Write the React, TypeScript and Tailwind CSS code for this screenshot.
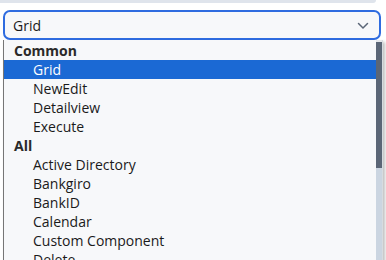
const common = ["Grid", "NewEdit", "Detailview", "Execute"];
const all = [
  "Active Directory",
  "Bankgiro",
  "BankID",
  "Calendar",
  "Custom Component",
  "Delete",
];

function Row({ label, active }: { label: string; active?: boolean }) {
  return (
    <div
      className={`h-[19px] flex items-center pl-[29px] text-[14px] leading-none ${
        active ? "bg-[#1b69d4] text-white" : "text-[#1a1a1a]"
      }`}
    >
      {label}
    </div>
  );
}

export default function App() {
  return (
    <div
      className="w-[386px] h-[260px] overflow-hidden bg-white relative"
      style={{ fontFamily: "'Open Sans', 'Noto Sans', sans-serif" }}
    >
      <div className="h-[3px] w-[376px] bg-[#dfe4ec] rounded-br-[3px]" />
      <div className="px-[3px] pt-[7px]">
        <div className="h-[30px] w-[378px] border-2 border-[#2f6ce0] rounded-[7px] bg-[#f7f8fa] flex items-center justify-between pl-[8px] pr-[10px]">
          <span className="text-[14px] text-[#1a1a1a]">Grid</span>
          <svg width="12" height="8" viewBox="0 0 12 8" className="mt-[1px]">
            <path
              d="M1.5 1.5 L6 6 L10.5 1.5"
              fill="none"
              stroke="#5b6677"
              strokeWidth="1.5"
              strokeLinecap="round"
            />
          </svg>
        </div>
        <div className="flex w-[380px] h-[230px] border-l border-[#767676] bg-[#f7f8fa] shadow-[2px_2px_3px_rgba(0,0,0,0.25)]">
          <div className="flex-1 pt-[1px]">
            <div className="h-[19px] flex items-center pl-[10px] text-[14px] font-bold text-[#2a2a2a]">
              Common
            </div>
            {common.map((c) => (
              <Row key={c} label={c} active={c === "Grid"} />
            ))}
            <div className="h-[19px] flex items-center pl-[10px] text-[14px] font-bold text-[#2a2a2a]">
              All
            </div>
            {all.map((c) => (
              <Row key={c} label={c} />
            ))}
          </div>
          <div className="w-[6px] flex flex-col bg-[#cbd5e1]">
            <div className="h-[2px] bg-[#e5e7eb]" />
            <div className="h-[126px] bg-[#5b6677]" />
          </div>
          <div className="w-[1px] bg-[#d7dbe0]" />
        </div>
      </div>
    </div>
  );
}
